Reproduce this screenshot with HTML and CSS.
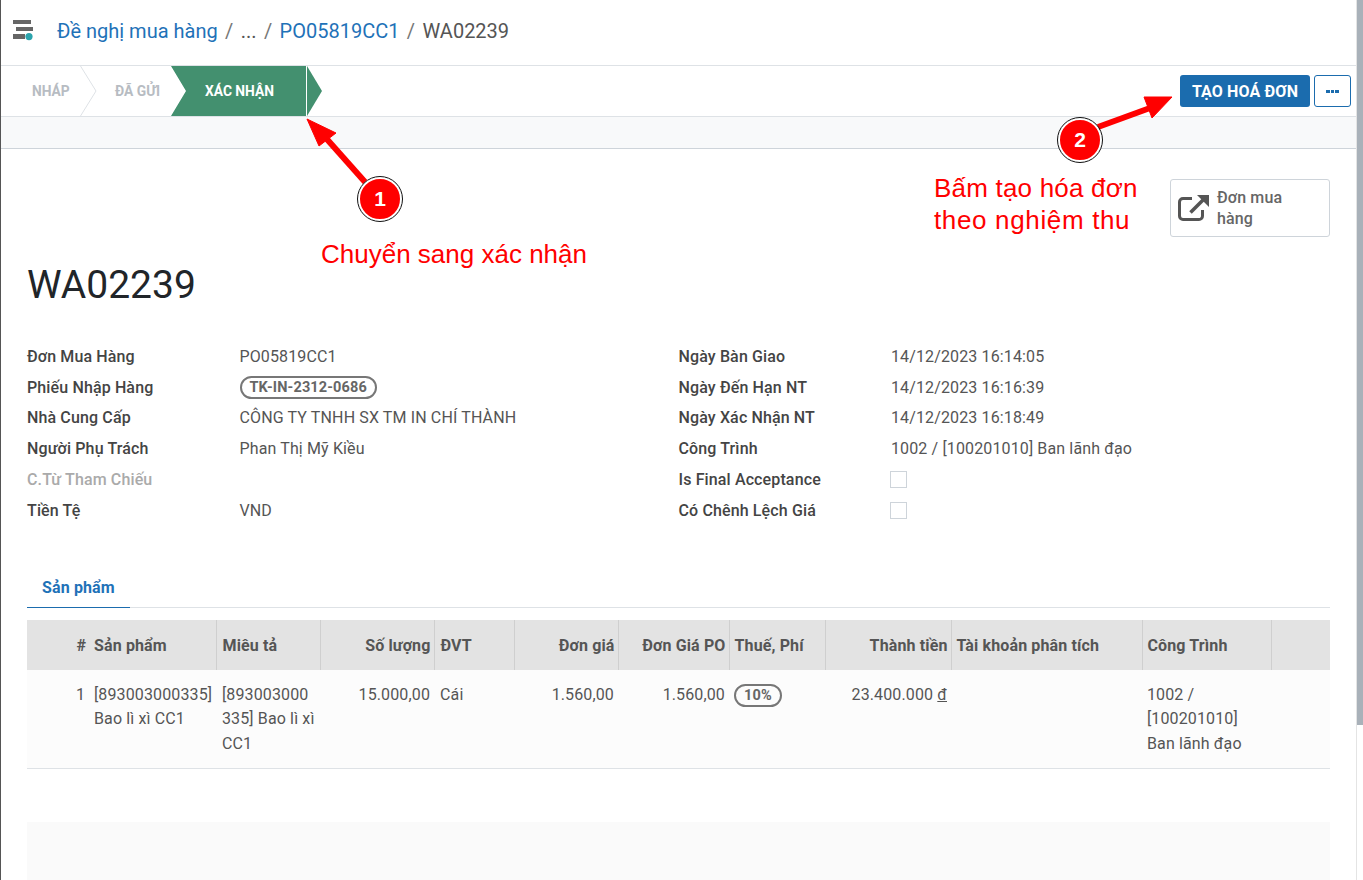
FILE: index.html
```html
<!DOCTYPE html>
<html lang="vi">
<head>
  <meta charset="UTF-8" />
  <title>WA02239</title>
  <link rel="stylesheet" href="styles.css">
</head>
<body>
  <div class="app">
    <div class="main">
      <div class="topbar">
        <svg class="logo" width="22" height="22" viewBox="0 0 22 22">
          <rect x="0" y="1" width="18" height="4" fill="#666"/>
          <rect x="3" y="8" width="17" height="4" fill="#666"/>
          <rect x="0" y="15" width="12" height="5" fill="#666"/>
          <circle cx="16" cy="17.6" r="3.6" fill="#2ba4ad"/>
        </svg>
        <div class="breadcrumb">
          <a>Đề nghị mua hàng</a>
          <span class="sep">/</span>
          <span>...</span>
          <span class="sep">/</span>
          <a>PO05819CC1</a>
          <span class="sep">/</span>
          <span>WA02239</span>
        </div>
      </div>

      <div class="statusbar">
        <div class="steps">
          <span class="step step-first">NHÁP</span>
          <svg class="chevron" width="17" height="50" viewBox="0 0 17 50"><path d="M0.5 0 L16 25 L0.5 50" fill="none" stroke="#dee2e6"/></svg>
          <span class="step step-second">ĐÃ GỬI</span>
          <span class="step-active">XÁC NHẬN</span>
          <span class="step-tip"></span>
        </div>
        <div class="actions">
          <button class="btn-primary">TẠO HOÁ ĐƠN</button>
          <button class="btn-more"><i></i><i></i><i></i></button>
        </div>
      </div>
      <div class="band"></div>

      <div class="sheet">
        <div class="button-box">
          <div class="stat-button">
            <svg width="32" height="32" viewBox="0 0 32 32" fill="none" stroke="#555" stroke-width="3">
              <path d="M14 6.5 H5 a3.5 3.5 0 0 0 -3.5 3.5 V24 a3.5 3.5 0 0 0 3.5 3.5 H21 a3.5 3.5 0 0 0 3.5 -3.5 V18" stroke-linejoin="round"/>
              <path d="M12.5 20.5 L26 7" stroke-width="3.6"/>
              <path d="M19 3 H31 V15 Z" fill="#555" stroke="none"/>
            </svg>
            <span>Đơn mua hàng</span>
          </div>
        </div>

        <h1>WA02239</h1>

        <div class="form-groups">
          <div class="form-group">
            <div class="row"><label>Đơn Mua Hàng</label><span>PO05819CC1</span></div>
            <div class="row"><label>Phiếu Nhập Hàng</label><span class="tag">TK-IN-2312-0686</span></div>
            <div class="row"><label>Nhà Cung Cấp</label><span>CÔNG TY TNHH SX TM IN CHÍ THÀNH</span></div>
            <div class="row"><label>Người Phụ Trách</label><span>Phan Thị Mỹ Kiều</span></div>
            <div class="row"><label class="muted">C.Từ Tham Chiếu</label><span></span></div>
            <div class="row"><label>Tiền Tệ</label><span>VND</span></div>
          </div>
          <div class="form-group">
            <div class="row"><label>Ngày Bàn Giao</label><span>14/12/2023 16:14:05</span></div>
            <div class="row"><label>Ngày Đến Hạn NT</label><span>14/12/2023 16:16:39</span></div>
            <div class="row"><label>Ngày Xác Nhận NT</label><span>14/12/2023 16:18:49</span></div>
            <div class="row"><label>Công Trình</label><span>1002 / [100201010] Ban lãnh đạo</span></div>
            <div class="row"><label>Is Final Acceptance</label><span class="checkbox"></span></div>
            <div class="row"><label>Có Chênh Lệch Giá</label><span class="checkbox"></span></div>
          </div>
        </div>

        <div class="tabs"><span class="tab">Sản phẩm</span></div>

        <table>
          <colgroup>
            <col class="c-index"><col class="c-product"><col class="c-desc"><col class="c-qty">
            <col class="c-unit"><col class="c-price"><col class="c-po"><col class="c-tax">
            <col class="c-total"><col class="c-account"><col class="c-project"><col>
          </colgroup>
          <thead>
            <tr>
              <th class="num no-line">#</th>
              <th>Sản phẩm</th>
              <th class="pad-wide">Miêu tả</th>
              <th class="num">Số lượng</th>
              <th class="pad-wide">ĐVT</th>
              <th class="num">Đơn giá</th>
              <th class="num">Đơn Giá PO</th>
              <th>Thuế, Phí</th>
              <th class="num">Thành tiền</th>
              <th>Tài khoản phân tích</th>
              <th>Công Trình</th>
              <th></th>
            </tr>
          </thead>
          <tbody>
            <tr>
              <td class="num">1</td>
              <td class="tight">[893003000335] Bao lì xì CC1</td>
              <td class="pad-wide">[893003000<br>335] Bao lì xì CC1</td>
              <td class="num">15.000,00</td>
              <td class="pad-wide">Cái</td>
              <td class="num">1.560,00</td>
              <td class="num">1.560,00</td>
              <td><span class="tag">10%</span></td>
              <td class="num">23.400.000 <u>đ</u></td>
              <td></td>
              <td>1002 / [100201010] Ban lãnh đạo</td>
              <td></td>
            </tr>
          </tbody>
        </table>

        <div class="totals"></div>
      </div>
    </div>
    <div class="scrollbar"><div class="thumb"></div></div>
  </div>

  <!-- chu thich huong dan, nam de len giao dien -->
  <svg class="arrows" width="1363" height="880" viewBox="0 0 1363 880">
    <path d="M365 182 L325 137" stroke="#f00" stroke-width="6" fill="none"/>
    <path d="M307 119 L336 133 L319 146 Z" fill="#f00" stroke="#f00"/>
    <path d="M1098 127 L1150 108" stroke="#f00" stroke-width="6" fill="none"/>
    <path d="M1172 97 L1144 97 L1152 118 Z" fill="#f00" stroke="#f00"/>
  </svg>
  <div class="badge badge-one">1</div>
  <div class="badge badge-two">2</div>
  <div class="note note-one">Chuyển sang xác nhận</div>
  <div class="note note-two"><span class="line-a">Bấm tạo hóa đơn</span><br><span class="line-b">theo nghiệm thu</span></div>
</body>
</html>
```

FILE: styles.css
```css
* {
  box-sizing: border-box;
}

body {
  margin: 0;
  height: 880px;
  overflow: hidden;
  font-family: Roboto, Arial, sans-serif;
  font-size: 16px;
  letter-spacing: 0.13px;
  color: #555;
  background: #fff;
}

.app {
  display: flex;
  height: 880px;
  border-left: 1px solid #555;
}

.main {
  flex: 1;
  min-width: 0;
}

/* Barre du haut */
.topbar {
  display: flex;
  align-items: center;
  height: 66px;
  padding: 0 0 5px 12px;
  border-bottom: 1px solid #dee2e6;
}

.breadcrumb {
  display: flex;
  gap: 7.4px;
  margin-left: 22px;
  margin-top: 2px;
  font-size: 20px;
  letter-spacing: 0;
  color: #555;
}

.breadcrumb a {
  color: #1f72b8;
}

.breadcrumb .sep {
  color: #777;
}

/* Statut */
.statusbar {
  display: flex;
  justify-content: space-between;
  align-items: center;
  height: 50px;
  padding-right: 5px;
}

.steps {
  display: flex;
  align-items: center;
  height: 50px;
}

.step {
  font-size: 13.8px;
  font-weight: 700;
  letter-spacing: 0;
  color: #b7bcc2;
}

.step-first {
  margin-left: 31px;
  width: 48px;
}

.step-second {
  margin-left: 18px;
  width: 56px;
}

.step-active {
  display: flex;
  align-items: center;
  width: 135px;
  height: 50px;
  padding-left: 34px;
  font-size: 13.8px;
  font-weight: 700;
  letter-spacing: 0;
  color: #fff;
  background: #43906f;
  clip-path: polygon(0 0, 100% 0, 100% 100%, 0 100%, 15px 50%);
}

.step-tip {
  width: 15px;
  height: 50px;
  margin-left: 1px;
  background: #43906f;
  clip-path: polygon(0 0, 100% 50%, 0 100%);
}

.actions {
  display: flex;
  gap: 4px;
}

.btn-primary {
  width: 130px;
  height: 32px;
  padding: 0;
  border: none;
  border-radius: 3px;
  font-family: Roboto, Arial, sans-serif;
  font-size: 16px;
  font-weight: 700;
  letter-spacing: 0.13px;
  color: #fff;
  background: #1b6cae;
}

.btn-more {
  display: flex;
  align-items: center;
  justify-content: center;
  gap: 1px;
  width: 37px;
  height: 32px;
  padding: 0;
  border: 1px solid #1b6cae;
  border-radius: 3px;
  background: #fff;
}

.btn-more i {
  width: 3.5px;
  height: 3px;
  background: #1b6cae;
}

.band {
  height: 33px;
  background: #f8f9fa;
  border-top: 1px solid #dee2e6;
  border-bottom: 1px solid #ced4da;
}

/* Fiche */
.sheet {
  padding: 30px 26px 0;
}

.button-box {
  display: flex;
  justify-content: flex-end;
}

.stat-button {
  display: flex;
  align-items: center;
  gap: 7px;
  width: 160px;
  height: 58px;
  padding-left: 7px;
  border: 1px solid #ced4da;
  border-radius: 3px;
  font-size: 16px;
  font-weight: 500;
  line-height: 21px;
  color: #666;
}

.stat-button span {
  width: 90px;
}

h1 {
  margin: 25px 0 0;
  font-size: 39px;
  font-weight: 400;
  line-height: 46px;
  letter-spacing: 0;
  color: #212529;
}

.form-groups {
  display: flex;
  margin-top: 33px;
}

.form-group {
  width: 651.5px;
}

.row {
  display: flex;
  align-items: center;
  height: 30.8px;
}

.row label {
  width: 212.5px;
  font-weight: 500;
  color: #444;
}

.row label.muted {
  color: #aaa;
}

.tag {
  display: inline-block;
  padding: 0 8px;
  border: 2px solid #777;
  border-radius: 12px;
  font-size: 14.5px;
  font-weight: 700;
  line-height: 19px;
  color: #666;
}

.checkbox {
  width: 17px;
  height: 17px;
  margin-left: -1px;
  border: 1px solid #ced4da;
}

/* Onglets */
.tabs {
  display: flex;
  height: 37px;
  margin-top: 45.2px;
  border-bottom: 1px solid #dee2e6;
}

.tab {
  width: 103px;
  height: 37px;
  padding: 7px 0 0 15px;
  border-bottom: 1px solid #1b6cae;
  font-size: 16px;
  font-weight: 700;
  color: #1f72b8;
}

/* Tableau */
table {
  width: 1303px;
  margin-top: 12px;
  border-collapse: collapse;
  table-layout: fixed;
}

.c-index { width: 62px; }
.c-product { width: 127px; }
.c-desc { width: 104px; }
.c-qty { width: 114px; }
.c-unit { width: 80px; }
.c-price { width: 104px; }
.c-po { width: 111px; }
.c-tax { width: 96px; }
.c-total { width: 126px; }
.c-account { width: 191px; }
.c-project { width: 129px; }

th {
  height: 50px;
  padding: 2px 5px 0;
  text-align: left;
  font-weight: 700;
  color: #555;
  background: #e3e3e3;
  border-right: 1px solid #cfcfcf;
}

th:last-child {
  border-right: none;
}

th.no-line {
  border-right: none;
}

td {
  height: 99px;
  padding: 13px 5px 0;
  vertical-align: top;
  line-height: 24.5px;
  background: #fcfcfc;
  border-bottom: 1px solid #dee2e6;
  overflow-wrap: break-word;
}

.num {
  text-align: right;
  padding-right: 4px;
}

th.num {
  padding-right: 3px;
}

th.pad-wide,
td.pad-wide {
  padding-left: 6px;
}

td.tight {
  padding-right: 0;
}

.totals {
  height: 58px;
  margin-top: 53px;
  background: #fafafa;
}

.scrollbar {
  width: 7px;
  border-left: 1px solid #e4e4e4;
  background: #fff;
}

.thumb {
  height: 725px;
  background: #a9b1b9;
}

/* Annotations */
.arrows {
  position: absolute;
  left: 0;
  top: 0;
  pointer-events: none;
}

.badge {
  position: absolute;
  display: flex;
  align-items: center;
  justify-content: center;
  width: 44px;
  height: 44px;
  border-radius: 50%;
  border: 2px solid #fff;
  outline: 1px solid #111;
  font-family: "Liberation Sans", Arial, sans-serif;
  font-size: 21px;
  font-weight: 700;
  letter-spacing: 0;
  color: #fff;
  background: #f00;
}

.badge-one {
  left: 358px;
  top: 177px;
}

.badge-two {
  left: 1058px;
  top: 118px;
}

.note {
  position: absolute;
  font-family: "Liberation Sans", Arial, sans-serif;
  font-size: 26px;
  line-height: 32px;
  letter-spacing: 0;
  color: #f00;
}

.note-one {
  left: 321px;
  top: 238px;
}

.note-two {
  left: 934px;
  top: 172px;
}

.line-a {
  letter-spacing: 0.2px;
}

.line-b {
  letter-spacing: 0.65px;
}
```
